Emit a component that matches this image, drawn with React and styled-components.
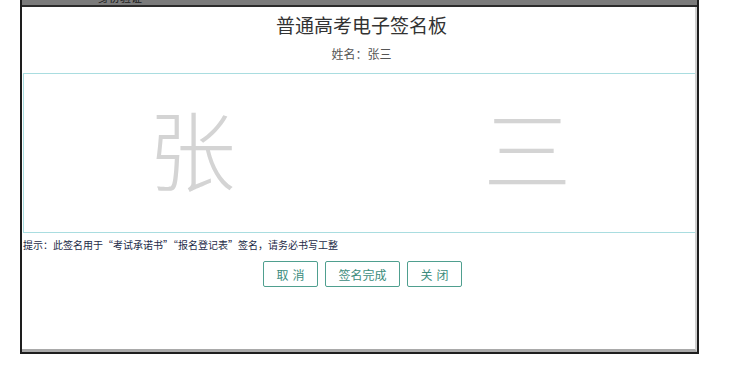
import React from 'react';
import styled, { createGlobalStyle } from 'styled-components';

const GlobalStyle = createGlobalStyle`
  html, body {
    margin: 0;
    padding: 0;
    background: #ffffff;
  }
  body {
    font-family: "Noto Sans CJK SC", "Noto Sans", sans-serif;
  }
`;

const Page = styled.div`
  width: 731px;
  height: 368px;
  padding-left: 20px;
  box-sizing: border-box;
`;

const Window = styled.div`
  width: 679px;
  box-sizing: border-box;
  border-left: 2px solid #1e1e1e;
  border-right: 2px solid #1e1e1e;
  border-bottom: 2px solid #1e1e1e;
  display: flex;
  flex-direction: column;
`;

const TopStrip = styled.div`
  height: 5px;
  background: #7b7b7b;
  border-bottom: 2px solid #2b2b2b;
  overflow: hidden;
  padding-left: 76px;
`;

const StripLabel = styled.span`
  display: block;
  margin-top: -9px;
  font-size: 11px;
  line-height: 12px;
  color: #1a1a1a;
`;

const Body = styled.div`
  height: 342px;
  border-right: 2px solid #cfcfcf;
  border-bottom: 3px solid #a9a9a9;
  display: flex;
  flex-direction: column;
  align-items: stretch;
  background: #fff;
`;

const Title = styled.h1`
  margin: 6px 0 0;
  text-align: center;
  font-size: 19px;
  line-height: 24px;
  font-weight: 400;
  color: #333;
  padding-left: 6px;
`;

const NameLine = styled.div`
  margin-top: 9px;
  text-align: center;
  font-size: 12px;
  line-height: 16px;
  color: #555;
  padding-left: 6px;
`;

const Canvas = styled.div`
  margin: 11px 0 0 1px;
  height: 160px;
  box-sizing: border-box;
  border: 1px solid #a9dde0;
  border-right: none;
  display: flex;
  align-items: center;
  justify-content: space-around;
  padding-bottom: 14px;
`;

const Ghost = styled.span`
  font-size: 88px;
  line-height: 1;
  font-weight: 300;
  color: #d4d4d4;
`;

const Hint = styled.div`
  margin: 5px 0 0 1px;
  font-size: 10px;
  line-height: 14px;
  color: #1d2b48;
`;

const Actions = styled.div`
  margin-top: 9px;
  display: flex;
  justify-content: center;
  gap: 7px;
  padding-left: 8px;
`;

const Button = styled.button`
  height: 26px;
  width: ${p => p.$w}px;
  box-sizing: border-box;
  padding: 0;
  background: #fff;
  border: 1px solid #4f9f8f;
  border-radius: 2px;
  color: #3c8c7c;
  font-family: inherit;
  font-size: 12px;
  letter-spacing: ${p => (p.$spaced ? '4px' : '0')};
  text-indent: ${p => (p.$spaced ? '4px' : '0')};
`;

export default function App() {
  return (
    <Page>
      <GlobalStyle />
      <Window>
        <TopStrip>
          <StripLabel>身份验证</StripLabel>
        </TopStrip>
        <Body>
          <Title>普通高考电子签名板</Title>
          <NameLine>姓名：张三</NameLine>
          <Canvas>
            <Ghost>张</Ghost>
            <Ghost>三</Ghost>
          </Canvas>
          <Hint>提示：此签名用于“考试承诺书”“报名登记表”签名，请务必书写工整</Hint>
          <Actions>
            <Button $w={55} $spaced>取消</Button>
            <Button $w={75}>签名完成</Button>
            <Button $w={55} $spaced>关闭</Button>
          </Actions>
        </Body>
      </Window>
    </Page>
  );
}
